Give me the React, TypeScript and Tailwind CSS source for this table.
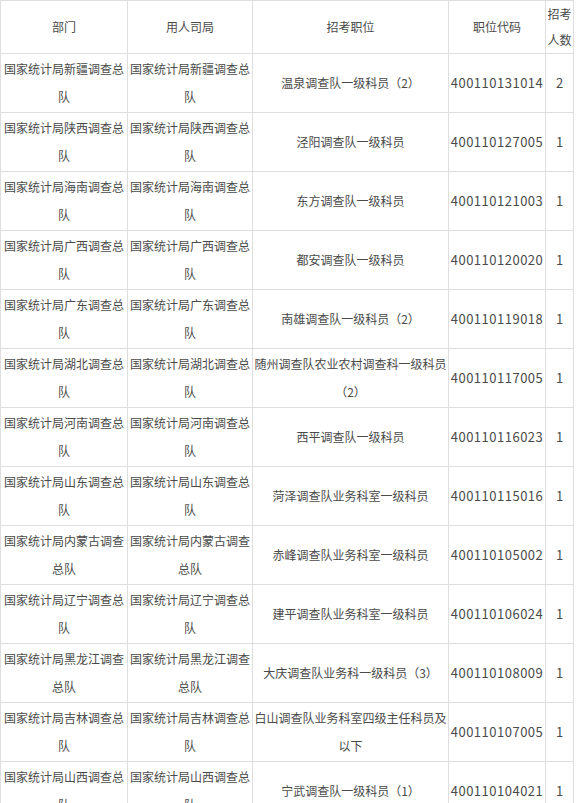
const ROWS = [
  { dept: ['国家统计局新疆调查总', '队'], pos: ['温泉调查队一级科员（2）'], code: '400110131014', num: '2' },
  { dept: ['国家统计局陕西调查总', '队'], pos: ['泾阳调查队一级科员'], code: '400110127005', num: '1' },
  { dept: ['国家统计局海南调查总', '队'], pos: ['东方调查队一级科员'], code: '400110121003', num: '1' },
  { dept: ['国家统计局广西调查总', '队'], pos: ['都安调查队一级科员'], code: '400110120020', num: '1' },
  { dept: ['国家统计局广东调查总', '队'], pos: ['南雄调查队一级科员（2）'], code: '400110119018', num: '1' },
  { dept: ['国家统计局湖北调查总', '队'], pos: ['随州调查队农业农村调查科一级科员', '（2）'], code: '400110117005', num: '1' },
  { dept: ['国家统计局河南调查总', '队'], pos: ['西平调查队一级科员'], code: '400110116023', num: '1' },
  { dept: ['国家统计局山东调查总', '队'], pos: ['菏泽调查队业务科室一级科员'], code: '400110115016', num: '1' },
  { dept: ['国家统计局内蒙古调查', '总队'], pos: ['赤峰调查队业务科室一级科员'], code: '400110105002', num: '1' },
  { dept: ['国家统计局辽宁调查总', '队'], pos: ['建平调查队业务科室一级科员'], code: '400110106024', num: '1' },
  { dept: ['国家统计局黑龙江调查', '总队'], pos: ['大庆调查队业务科一级科员（3）'], code: '400110108009', num: '1' },
  { dept: ['国家统计局吉林调查总', '队'], pos: ['白山调查队业务科室四级主任科员及', '以下'], code: '400110107005', num: '1' },
  { dept: ['国家统计局山西调查总', '队'], pos: ['宁武调查队一级科员（1）'], code: '400110104021', num: '1' },
]

function Lines({ lines }: { lines: string[] }) {
  return (
    <>
      {lines.map((l, i) => (
        <div key={i} className="whitespace-nowrap">{l}</div>
      ))}
    </>
  )
}

const cell = 'border border-[#dedede] text-center align-middle p-0'

export default function App() {
  return (
    <div className="w-[576px] h-[803px] overflow-hidden bg-white font-['Noto_Sans_CJK_SC',sans-serif] text-[12px] text-[#4a4a4a]">
      <table className="table-fixed border-collapse w-[573px]">
        <colgroup>
          <col className="w-[127px]" />
          <col className="w-[125px]" />
          <col className="w-[196px]" />
          <col className="w-[97px]" />
          <col className="w-[28px]" />
        </colgroup>
        <thead>
          {/* header */}
          <tr className="h-[53px] leading-[26px]">
            <td className={cell}>部门</td>
            <td className={cell}>用人司局</td>
            <td className={cell}>招考职位</td>
            <td className={cell}>职位代码</td>
            <td className={cell}>
              <div>招考</div>
              <div>人数</div>
            </td>
          </tr>
        </thead>
        <tbody>
          {ROWS.map((r) => (
            <tr key={r.code} className="h-[59px] leading-[28px]">
              <td className={cell}><Lines lines={r.dept} /></td>
              <td className={cell}><Lines lines={r.dept} /></td>
              <td className={cell}><Lines lines={r.pos} /></td>
              <td className={`${cell} text-[13px] tracking-[0.5px]`}>{r.code}</td>
              <td className={`${cell} text-[13px]`}>{r.num}</td>
            </tr>
          ))}
        </tbody>
      </table>
    </div>
  )
}
